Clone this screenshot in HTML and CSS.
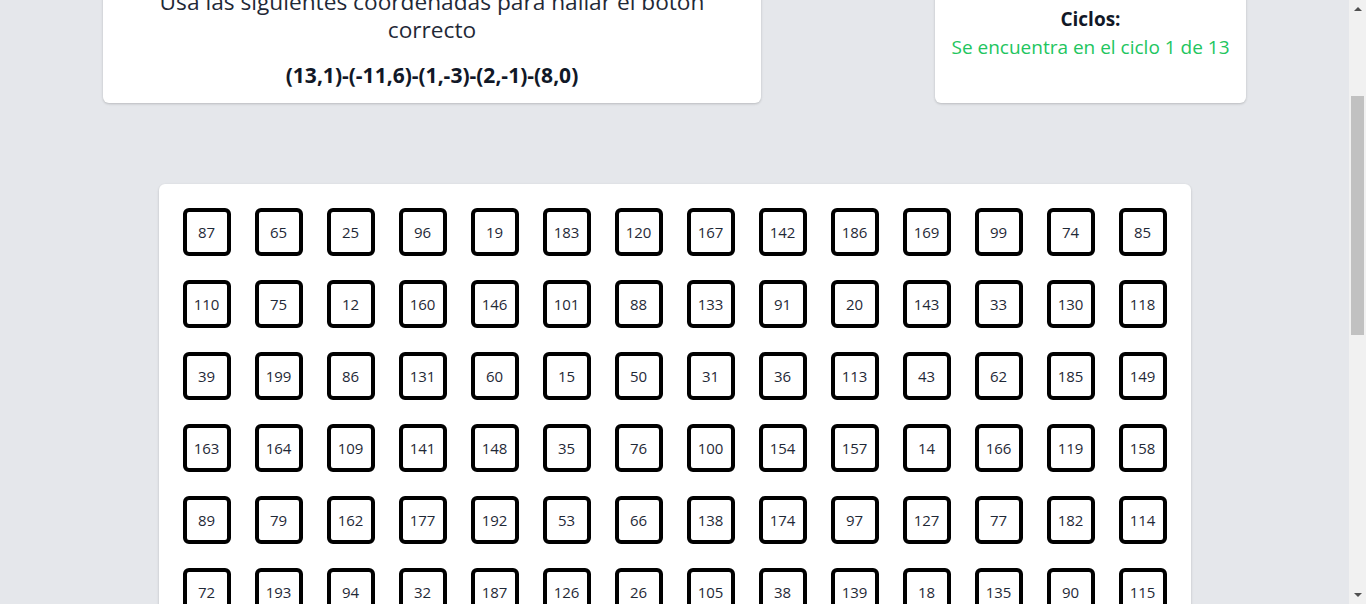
FILE: index.html
```html
<!DOCTYPE html>
<html lang="es">
<head>
<meta charset="utf-8">
<title>Coordenadas</title>
<link rel="stylesheet" href="styles.css">
</head>
<body>
<main class="page">
  <section class="top">
    <div class="card info">
      <p class="lead">Usa las siguientes coordenadas para hallar el botón correcto</p>
      <p class="coords">(13,1)-(-11,6)-(1,-3)-(2,-1)-(8,0)</p>
    </div>
    <div class="card cycles">
      <p class="label">Ciclos:</p>
      <p class="status">Se encuentra en el ciclo 1 de 13</p>
    </div>
  </section>
  <section class="card board">
    <button class="cell">87</button><button class="cell">65</button><button class="cell">25</button><button class="cell">96</button><button class="cell">19</button><button class="cell">183</button><button class="cell">120</button><button class="cell">167</button><button class="cell">142</button><button class="cell">186</button><button class="cell">169</button><button class="cell">99</button><button class="cell">74</button><button class="cell">85</button>
    <button class="cell">110</button><button class="cell">75</button><button class="cell">12</button><button class="cell">160</button><button class="cell">146</button><button class="cell">101</button><button class="cell">88</button><button class="cell">133</button><button class="cell">91</button><button class="cell">20</button><button class="cell">143</button><button class="cell">33</button><button class="cell">130</button><button class="cell">118</button>
    <button class="cell">39</button><button class="cell">199</button><button class="cell">86</button><button class="cell">131</button><button class="cell">60</button><button class="cell">15</button><button class="cell">50</button><button class="cell">31</button><button class="cell">36</button><button class="cell">113</button><button class="cell">43</button><button class="cell">62</button><button class="cell">185</button><button class="cell">149</button>
    <button class="cell">163</button><button class="cell">164</button><button class="cell">109</button><button class="cell">141</button><button class="cell">148</button><button class="cell">35</button><button class="cell">76</button><button class="cell">100</button><button class="cell">154</button><button class="cell">157</button><button class="cell">14</button><button class="cell">166</button><button class="cell">119</button><button class="cell">158</button>
    <button class="cell">89</button><button class="cell">79</button><button class="cell">162</button><button class="cell">177</button><button class="cell">192</button><button class="cell">53</button><button class="cell">66</button><button class="cell">138</button><button class="cell">174</button><button class="cell">97</button><button class="cell">127</button><button class="cell">77</button><button class="cell">182</button><button class="cell">114</button>
    <button class="cell">72</button><button class="cell">193</button><button class="cell">94</button><button class="cell">32</button><button class="cell">187</button><button class="cell">126</button><button class="cell">26</button><button class="cell">105</button><button class="cell">38</button><button class="cell">139</button><button class="cell">18</button><button class="cell">135</button><button class="cell">90</button><button class="cell">115</button>
    <button class="cell">47</button><button class="cell">2</button><button class="cell">136</button><button class="cell">58</button><button class="cell">171</button><button class="cell">9</button><button class="cell">103</button><button class="cell">184</button><button class="cell">28</button><button class="cell">155</button><button class="cell">64</button><button class="cell">117</button><button class="cell">40</button><button class="cell">190</button>
    <button class="cell">5</button><button class="cell">145</button><button class="cell">82</button><button class="cell">21</button><button class="cell">176</button><button class="cell">52</button><button class="cell">129</button><button class="cell">11</button><button class="cell">98</button><button class="cell">161</button><button class="cell">34</button><button class="cell">188</button><button class="cell">69</button><button class="cell">107</button>
    <button class="cell">150</button><button class="cell">44</button><button class="cell">3</button><button class="cell">122</button><button class="cell">71</button><button class="cell">195</button><button class="cell">17</button><button class="cell">93</button><button class="cell">173</button><button class="cell">56</button><button class="cell">8</button><button class="cell">140</button><button class="cell">27</button><button class="cell">112</button>
    <button class="cell">83</button><button class="cell">168</button><button class="cell">23</button><button class="cell">57</button><button class="cell">1</button><button class="cell">134</button><button class="cell">189</button><button class="cell">46</button><button class="cell">102</button><button class="cell">13</button><button class="cell">179</button><button class="cell">61</button><button class="cell">152</button><button class="cell">30</button>
    <button class="cell">125</button><button class="cell">7</button><button class="cell">92</button><button class="cell">41</button><button class="cell">178</button><button class="cell">67</button><button class="cell">116</button><button class="cell">151</button><button class="cell">22</button><button class="cell">194</button><button class="cell">49</button><button class="cell">4</button><button class="cell">144</button><button class="cell">80</button>
    <button class="cell">10</button><button class="cell">170</button><button class="cell">59</button><button class="cell">128</button><button class="cell">37</button><button class="cell">106</button><button class="cell">16</button><button class="cell">181</button><button class="cell">73</button><button class="cell">147</button><button class="cell">54</button><button class="cell">191</button><button class="cell">29</button><button class="cell">121</button>
    <button class="cell">165</button><button class="cell">48</button><button class="cell">84</button><button class="cell">6</button><button class="cell">137</button><button class="cell">24</button><button class="cell">172</button><button class="cell">95</button><button class="cell">42</button><button class="cell">111</button><button class="cell">159</button><button class="cell">68</button><button class="cell">180</button><button class="cell">55</button>
    <button class="cell">63</button><button class="cell">132</button><button class="cell">45</button><button class="cell">175</button><button class="cell">104</button><button class="cell">78</button><button class="cell">123</button><button class="cell">51</button><button class="cell">153</button><button class="cell">81</button><button class="cell">108</button><button class="cell">70</button><button class="cell">156</button><button class="cell">124</button>
  </section>
</main>
<div class="scrollbar" aria-hidden="true">
  <span class="arrow up"></span>
  <div class="track"><span class="thumb"></span></div>
  <span class="arrow down"></span>
</div>
<script src="script.js"></script>
</body>
</html>
```

FILE: styles.css
```css
html, body {
  margin: 0;
  padding: 0;
}
body {
  background: #e5e7eb;
  font-family: "Open Sans", "Noto Sans", sans-serif;
  color: #1f2937;
  padding-right: 17px;
}
.page {
  width: 1143px;
  margin: 0 auto;
  padding: 170px 0 25px;
  display: flex;
  flex-direction: column;
  align-items: center;
}
.top {
  width: 100%;
  display: flex;
  justify-content: space-between;
}
.card {
  background: #fff;
  border-radius: 6px;
  box-shadow: 0 1px 3px rgba(0,0,0,0.12), 0 1px 2px rgba(0,0,0,0.08);
}
.card p { margin: 0; }
.info {
  width: 658px;
  box-sizing: border-box;
  padding: 18px 24px 14px;
  text-align: center;
}
.lead {
  font-size: 22.7px;
  line-height: 28px;
  color: #1f2937;
}
.coords {
  margin-top: 17px !important;
  font-size: 21px;
  line-height: 28px;
  font-weight: 700;
  color: #111827;
}
.cycles {
  width: 311px;
  box-sizing: border-box;
  padding-top: 35px;
  text-align: center;
}
.label {
  font-size: 19px;
  line-height: 28px;
  font-weight: 700;
  color: #111827;
}
.status {
  font-size: 19px;
  line-height: 28px;
  color: #22c55e;
}
.board {
  margin-top: 81px;
  box-sizing: border-box;
  width: 1032px;
  padding: 24px;
  display: grid;
  grid-template-columns: repeat(14, 48px);
  grid-auto-rows: 48px;
  gap: 24px;
}
.cell {
  box-sizing: border-box;
  width: 48px;
  height: 48px;
  border: 4px solid #000;
  border-radius: 6px;
  background: #fff;
  padding: 0;
  font-family: "Open Sans", "Noto Sans", sans-serif;
  font-size: 15px;
  color: #1f2937;
  cursor: pointer;
}
.scrollbar {
  position: fixed;
  top: 0;
  right: 0;
  width: 17px;
  height: 100vh;
  background: #f1f1f1;
  display: flex;
  flex-direction: column;
  align-items: center;
}
.arrow {
  width: 0;
  height: 0;
  border-left: 4px solid transparent;
  border-right: 4px solid transparent;
  margin: 7px 0 6px;
}
.arrow.up { border-bottom: 4px solid #505050; }
.arrow.down { border-top: 4px solid #505050; margin: 6px 0 7px; }
.track {
  flex: 1;
  width: 100%;
  display: flex;
  justify-content: center;
}
.thumb {
  width: 13px;
  height: 239px;
  margin-top: 79px;
  background: #c1c1c1;
}
```

FILE: script.js
```js
window.scrollTo(0, 200);
```
